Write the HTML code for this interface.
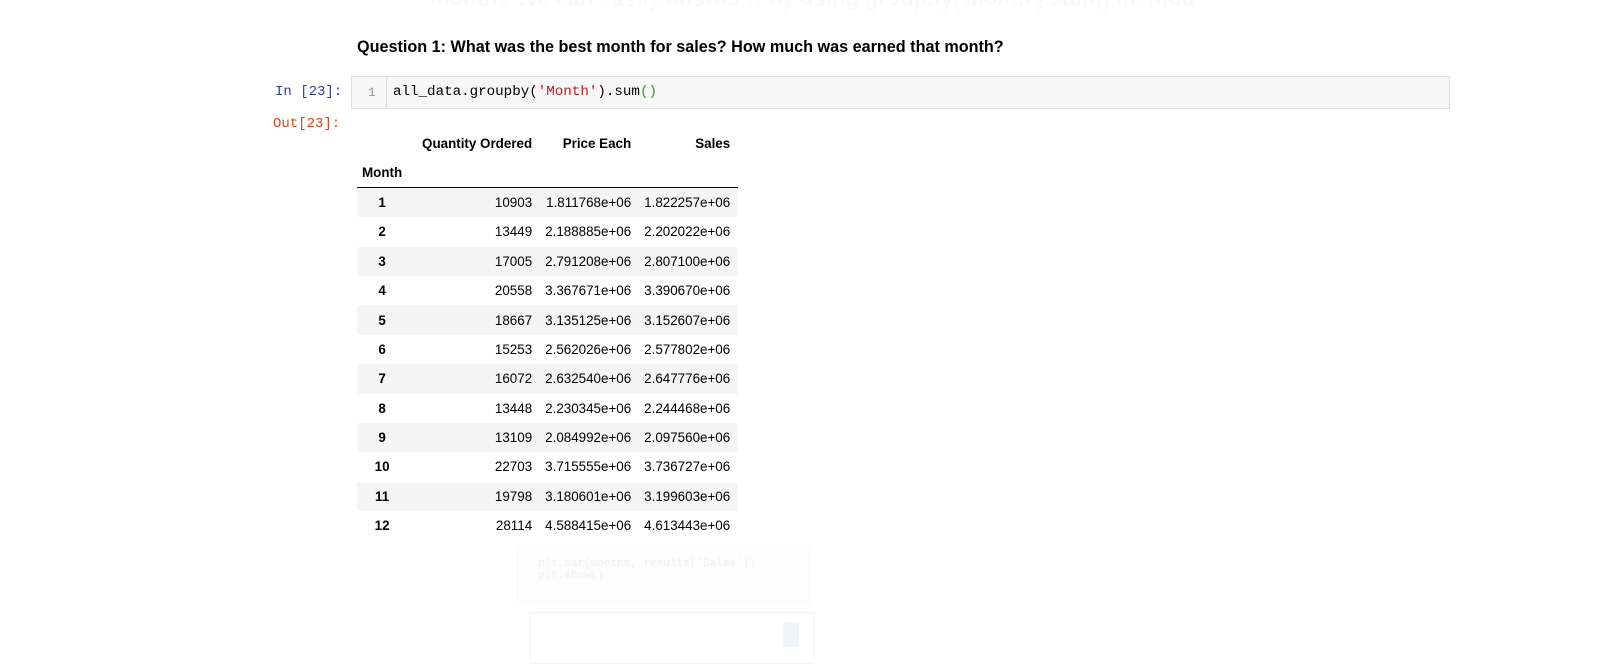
<!DOCTYPE html>
<html><head><meta charset="utf-8"><style>
body{margin:0;width:1599px;height:659px;background:#fff;position:relative;overflow:hidden;font-family:"Liberation Sans",Arial,sans-serif;}
.a{position:absolute;white-space:nowrap;}
.mono{font-family:"Liberation Mono","DejaVu Sans Mono",monospace;}
table{position:absolute;left:357px;top:129px;border-collapse:collapse;font-size:13.4px;color:#000;}
td,th{height:29.4px;padding:0 8px 0 5px;text-align:right;box-sizing:border-box;}
th{font-weight:bold;}
tbody tr:nth-child(odd){background:#f5f5f5;}
tbody th{text-align:center;}
</style></head><body>
<div class="a" style="left:430px;top:-14px;font-size:22px;color:#f9f9f9;font-weight:bold;">month? We can easily answer it by using groupby('Month').sum() method</div>
<div class="a" style="left:357px;top:38px;font-size:16.2px;font-weight:bold;color:#000;">Question 1: What was the best month for sales? How much was earned that month?</div>
<div class="a mono" style="left:275px;top:84px;font-size:14px;color:#303f9f;">In [23]:</div>
<div class="a mono" style="left:273px;top:116px;font-size:14px;color:#d84315;">Out[23]:</div>
<div class="a" style="left:351px;top:76px;width:1097px;height:31px;border:1px solid #ddd;background:#f7f7f7;"></div>
<div class="a" style="left:386px;top:77px;width:1px;height:31px;background:#ddd;"></div>
<div class="a mono" style="left:368px;top:85px;font-size:13px;color:#999;">1</div>
<div class="a mono" style="left:393px;top:84px;font-size:14.2px;color:#000;">all_data.groupby(<span style="color:#ba2121">'Month'</span>).sum<span style="color:#2a9d2a">()</span></div>
<table>
<thead>
<tr><th style="width:53px"></th><th style="width:130px">Quantity Ordered</th><th style="width:98px">Price Each</th><th style="width:99px">Sales</th></tr>
<tr style="border-bottom:1.5px solid #000"><th style="text-align:left;padding-left:5px">Month</th><th></th><th></th><th></th></tr>
</thead>
<tbody>
<tr><th>1</th><td>10903</td><td>1.811768e+06</td><td>1.822257e+06</td></tr>
<tr><th>2</th><td>13449</td><td>2.188885e+06</td><td>2.202022e+06</td></tr>
<tr><th>3</th><td>17005</td><td>2.791208e+06</td><td>2.807100e+06</td></tr>
<tr><th>4</th><td>20558</td><td>3.367671e+06</td><td>3.390670e+06</td></tr>
<tr><th>5</th><td>18667</td><td>3.135125e+06</td><td>3.152607e+06</td></tr>
<tr><th>6</th><td>15253</td><td>2.562026e+06</td><td>2.577802e+06</td></tr>
<tr><th>7</th><td>16072</td><td>2.632540e+06</td><td>2.647776e+06</td></tr>
<tr><th>8</th><td>13448</td><td>2.230345e+06</td><td>2.244468e+06</td></tr>
<tr><th>9</th><td>13109</td><td>2.084992e+06</td><td>2.097560e+06</td></tr>
<tr><th>10</th><td>22703</td><td>3.715555e+06</td><td>3.736727e+06</td></tr>
<tr><th>11</th><td>19798</td><td>3.180601e+06</td><td>3.199603e+06</td></tr>
<tr><th>12</th><td>28114</td><td>4.588415e+06</td><td>4.613443e+06</td></tr>
</tbody></table>
<div class="a" style="left:517px;top:545px;width:290px;height:58px;border:1px solid #f9f9f9;background:#fdfdfd;"></div>
<div class="a mono" style="left:538px;top:558px;font-size:11px;color:#f0f0f0;">plt.bar(months, results['Sales'])<br>plt.show()</div>
<div class="a" style="left:530px;top:612px;width:282px;height:50px;border:1px solid #f4f4f4;"></div>
<div class="a" style="left:783px;top:622px;width:16px;height:25px;background:#f2f5f8;"></div>
</body></html>
